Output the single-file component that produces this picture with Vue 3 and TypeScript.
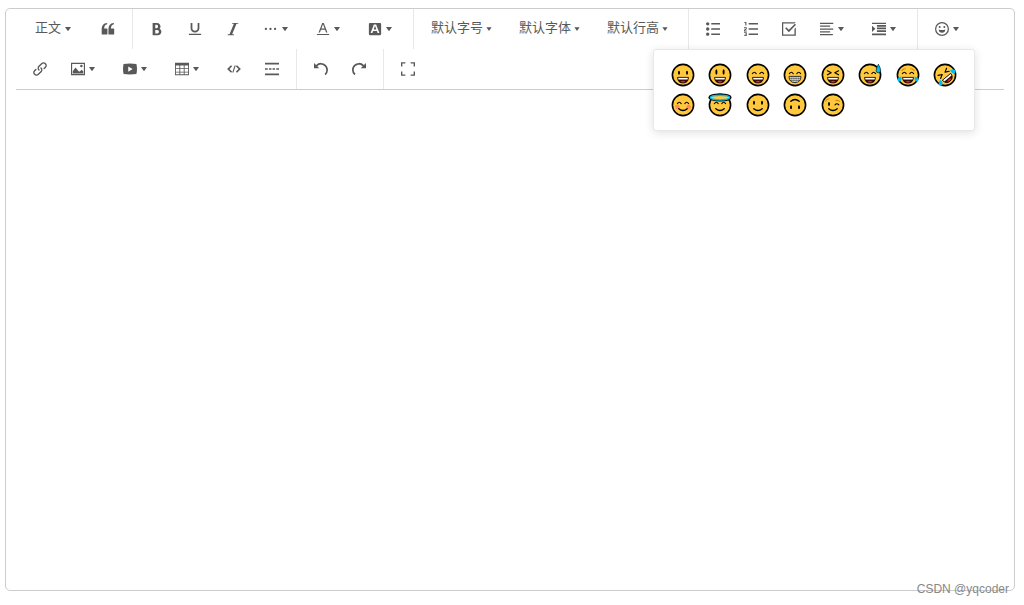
<script setup lang="ts">
import { ref } from 'vue'

interface Tool {
  kind: 'icon' | 'text' | 'divider'
  label?: string
  text?: string
  paths?: string
  menu?: boolean
  compact?: boolean
  heading?: boolean
  emoji?: boolean
}

const divider: Tool = { kind: 'divider' }
const icon = (label: string, paths: string, menu = false): Tool => ({ kind: 'icon', label, paths, menu })

const arrow =
  'M498.7 655.8l-197.6-268c-8.1-10.9-.3-26.4 13.3-26.4h395.2c13.6 0 21.4 15.4 13.3 26.4l-197.6 268c-6.6 9-20 9-26.6 0z'

const tools: Tool[] = [
  { kind: 'text', text: '正文', heading: true },
  icon('引用', 'M925 920H585q-40 0-40-40V590C545 270 660 100 945 80v80C800 190 730 290 725 480h200q40 0 40 40v360q0 40-40 40zM430 920H90q-40 0-40-40V590C50 270 165 100 450 80v80C305 190 235 290 230 480h200q40 0 40 40v360q0 40-40 40z'),
  divider,
  icon('粗体', 'M707.872 484.64A254.88 254.88 0 0 0 768 320c0-141.152-114.848-256-256-256H192v896h384c141.152 0 256-114.848 256-256a256.096 256.096 0 0 0-124.128-219.36zM384 192h101.504c55.968 0 101.504 57.408 101.504 128s-45.536 128-101.504 128H384V192z m159.008 640H384v-256h159.008c58.464 0 106.016 57.408 106.016 128s-47.552 128-106.016 128z'),
  icon('下划线', 'M704 64l128 0 0 416c0 159.072-143.264 288-320 288s-320-128.928-320-288l0-416 128 0 0 416c0 40.16 18.24 78.688 51.36 108.512 36.896 33.216 86.848 51.488 140.64 51.488s103.744-18.304 140.64-51.488c33.12-29.792 51.36-68.352 51.36-108.512l0-416zM64 864l896 0 0 80-896 0z'),
  icon('斜体', 'M896 64v64h-128L448 896h128v64H128v-64h128L576 128h-128V64z'),
  icon('更多', 'M140 505m-85 0a85 85 0 1 0 170 0a85 85 0 1 0-170 0zM475 505m-85 0a85 85 0 1 0 170 0a85 85 0 1 0-170 0zM810 505m-85 0a85 85 0 1 0 170 0a85 85 0 1 0-170 0z', true),
  icon('文字颜色', 'M64 872h896v80H64zM456 64h112l270 700H736l-76-205H364l-76 205H186zM396 475h232L512 160z', true),
  icon('背景色', 'M140 64h744q76 0 76 76v744q0 76-76 76H140q-76 0-76-76V140q0-76 76-76zM430 180L190 812h130l54-154h276l54 154h130L594 180zM414 548l98-270 98 270z', true),
  divider,
  { kind: 'text', text: '默认字号', compact: true },
  { kind: 'text', text: '默认字体', compact: true },
  { kind: 'text', text: '默认行高', compact: true },
  divider,
  icon('无序列表', 'M384 80h640v110H384zM384 457h640v110H384zM384 834h640v110H384zM0 135a125 125 0 1 0 250 0a125 125 0 1 0-250 0zM0 512a125 125 0 1 0 250 0a125 125 0 1 0-250 0zM0 889a125 125 0 1 0 250 0a125 125 0 1 0-250 0z'),
  icon('有序列表', 'M340 80h684v110H340zM340 457h684v110H340zM340 834h684v110H340zM96 0h80v256H96V70H32V0zM0 384h200v154L70 600v24h130v64H0V558l130-62v-48H0zM0 752h200v272H0v-60h130v-46H50v-56h80v-50H0z'),
  icon('待办', 'M0 20h1000l-90 90H90v804h820V520l100-110v604H0zM230 460l80-80 190 190L944 130l80 80-524 540z'),
  icon('对齐', 'M0 50h970v90H0zM0 260h740v90H0zM0 470h970v90H0zM0 680h740v90H0zM0 880h940v90H0z', true),
  icon('缩进', 'M0 50h1024v100H0zM360 212h664v130H360zM360 408h664v130H360zM360 604h664v130H360zM0 850h1024v110H0zM0 270l250 230L0 730z', true),
  divider,
  { kind: 'icon', label: '表情', menu: true, emoji: true, paths: 'M512 0a512 512 0 1 0 0 1024A512 512 0 0 0 512 0zM512 92a420 420 0 1 1 0 840a420 420 0 0 1 0-840zM270 370a72 72 0 1 0 144 0a72 72 0 1 0-144 0zM610 370a72 72 0 1 0 144 0a72 72 0 1 0-144 0zM270 540q242 90 484 0q-20 240-242 240T270 540z' },
  icon('链接', 'M440.224 635.776a51.84 51.84 0 0 1-36.768-15.232c-95.136-95.136-95.136-249.92 0-345.056l192-192C641.536 37.408 702.816 12.032 768 12.032s126.432 25.376 172.544 71.456c95.136 95.136 95.136 249.92 0 345.056l-87.776 87.776a51.968 51.968 0 1 1-73.536-73.536l87.776-87.776a140.16 140.16 0 0 0 0-197.984c-26.432-26.432-61.6-40.992-99.008-40.992s-72.544 14.56-99.008 40.992l-192 192a140.16 140.16 0 0 0 0 197.984 51.968 51.968 0 0 1-36.768 88.768zM256 1012a242.4 242.4 0 0 1-172.544-71.456c-95.136-95.136-95.136-249.92 0-345.056l87.776-87.776a51.968 51.968 0 1 1 73.536 73.536l-87.776 87.776a140.16 140.16 0 0 0 0 197.984c26.432 26.432 61.6 40.992 99.008 40.992s72.544-14.56 99.008-40.992l192-192a140.16 140.16 0 0 0 0-197.984 51.968 51.968 0 1 1 73.536-73.536c95.136 95.136 95.136 249.92 0 345.056l-192 192A242.4 242.4 0 0 1 256 1012z'),
  icon('图片', 'M0 54h1024v916H0zM84 138v748h856V138zM850 288a90 90 0 1 1-180 0a90 90 0 1 1 180 0zM896 832H128V680l200-270 250 290h60l140-130 118 110z', true),
  icon('视频', 'M981.184 145C837.568 125 678.848 110 512 110S186.432 125 42.816 145C15.296 267.808 0 386.848 0 512s15.264 244.16 42.816 367C186.464 899 345.152 914 512 914s325.568-15 469.184-35C1008.704 756.192 1024 637.152 1024 512s-15.264-244.16-42.816-367zM384 704V320l320 192-320 192z', true),
  icon('表格', 'M0 54v916h1024V54zM384 704V512h256v192zM640 768v128H384V768zM640 256v192H384V256zM320 256v192H64V256zM64 512h256v192H64zM704 512h256v192H704zM704 448V256h256v192zM64 768h256v128H64zM704 896V768h256v128z', true),
  icon('代码', 'M290 230l88 78-196 204 196 204-88 78L10 512zM734 230l-88 78 196 204-196 204 88 78 280-282zM556 256h84L470 768h-84z'),
  icon('分割线', 'M0 60h1024v120H0zM0 850h1024v120H0zM0 460h200v100H0zM290 460h180v100H290zM554 460h180v100H554zM824 460h200v100H824z'),
  divider,
  icon('撤销', 'M512 64A510.272 510.272 0 0 0 149.984 213.984L0.032 64v384h384L240.512 304.48A382.784 382.784 0 0 1 512.032 192c212.064 0 384 171.936 384 384 0 114.688-50.304 217.632-130.016 288l84.672 96a510.72 510.72 0 0 0 173.344-384c0-282.784-229.216-512-512-512z'),
  icon('重做', 'M0 576a510.72 510.72 0 0 0 173.344 384l84.672-96A383.136 383.136 0 0 1 128 576C128 363.936 299.936 192 512 192c106.048 0 202.048 42.976 271.52 112.48L640 448h384V64l-149.984 149.984A510.272 510.272 0 0 0 512 64C229.216 64 0 293.216 0 576z'),
  divider,
  icon('全屏', 'M0 16h320v100H100v220H0zM704 16h320v320H924V116H704zM0 688h100v220h220v100H0zM924 688h100v320H704V908h220z'),
]

type Face =
  | 'grinning' | 'smiley' | 'smile' | 'grin' | 'laughing' | 'sweat' | 'joy' | 'rofl'
  | 'blush' | 'innocent' | 'slight' | 'upside' | 'wink'

const faces: { name: Face; label: string }[] = [
  { name: 'grinning', label: '😀' },
  { name: 'smiley', label: '😃' },
  { name: 'smile', label: '😄' },
  { name: 'grin', label: '😁' },
  { name: 'laughing', label: '😆' },
  { name: 'sweat', label: '😅' },
  { name: 'joy', label: '😂' },
  { name: 'rofl', label: '🤣' },
  { name: 'blush', label: '😊' },
  { name: 'innocent', label: '😇' },
  { name: 'slight', label: '🙂' },
  { name: 'upside', label: '🙃' },
  { name: 'wink', label: '😉' },
]

const isOneOf = (face: Face, ...names: Face[]) => names.includes(face)

const content = ref('')
const emojiOpen = ref(true)

function press(tool: Tool) {
  if (tool.emoji) emojiOpen.value = !emojiOpen.value
}
</script>

<template>
  <main class="page">
    <section class="editor">
      <div class="toolbar" role="toolbar" aria-label="工具栏">
        <template v-for="(tool, i) in tools" :key="i">
          <span v-if="tool.kind === 'divider'" class="divider"></span>
          <div v-else class="item">
            <button
              type="button"
              :class="['tool', { heading: tool.heading, select: tool.compact }]"
              :aria-label="tool.label"
              @click="press(tool)"
            >
              <template v-if="tool.kind === 'text'">
                <span>{{ tool.text }}</span>
                <svg :class="['arrow', { compact: tool.compact }]" viewBox="0 0 1024 1024"><path :d="arrow" /></svg>
              </template>
              <template v-else>
                <svg class="icon" viewBox="0 0 1024 1024"><path fill-rule="evenodd" :d="tool.paths" /></svg>
                <svg v-if="tool.menu" class="arrow" viewBox="0 0 1024 1024"><path :d="arrow" /></svg>
              </template>
            </button>
            <div v-if="tool.emoji && emojiOpen" class="popup">
              <button
                v-for="face in faces"
                :key="face.name"
                type="button"
                class="emoji"
                :aria-label="face.label"
                @click="content += face.label"
              >
                <svg class="face" viewBox="0 0 24 24">
                  <circle cx="12" cy="12" r="10.6" fill="#ffc83d" stroke="#000" stroke-width="1.6" />
                  <g :transform="face.name === 'rofl' ? 'rotate(-40 12 12)' : face.name === 'upside' ? 'rotate(180 12 12)' : undefined">
                    <g v-if="isOneOf(face.name, 'grinning', 'slight', 'upside')" fill="#000">
                      <ellipse cx="8" cy="9.8" rx="1" ry="2" />
                      <ellipse cx="16" cy="9.8" rx="1" ry="2" />
                    </g>
                    <g v-if="face.name === 'smiley'" fill="#000">
                      <ellipse cx="8.4" cy="9" rx="1" ry="2.8" />
                      <ellipse cx="15.6" cy="9" rx="1" ry="2.8" />
                    </g>
                    <path
                      v-if="isOneOf(face.name, 'smile', 'grin', 'sweat', 'joy', 'blush', 'innocent')"
                      class="line"
                      d="M6.4 10.6q1.9-2.6 3.8 0M13.8 10.6q1.9-2.6 3.8 0"
                    />
                    <path
                      v-if="isOneOf(face.name, 'laughing', 'rofl')"
                      class="line"
                      d="M6.4 7.8l3.8 2-3.8 2M17.6 7.8l-3.8 2 3.8 2"
                    />
                    <g v-if="face.name === 'wink'">
                      <ellipse cx="8" cy="11" rx="1" ry="2" fill="#000" />
                      <path class="line" d="M14 11.8q1.9-2.2 3.8 0" />
                      <path class="brow" d="M4.6 8.2q1.2-2.6 3.6-2.4M14.8 7.6q2-.8 3.6.8" />
                    </g>
                    <path v-if="face.name === 'joy'" class="brow" d="M5.8 7.6q1.3-2 3.5-1.8M14.7 5.8q2.2-.2 3.5 1.8" />
                    <g v-if="isOneOf(face.name, 'grinning', 'smiley', 'smile', 'laughing', 'sweat', 'joy', 'rofl')">
                      <path d="M6.6 14.4h10.8q-.2 5.6-5.4 5.6t-5.4-5.6z" fill="#3b0a08" />
                      <path d="M7 14.4h10v2.1H7z" fill="#fff" />
                      <path d="M9 19.2q3-3 6 0-3 1.4-6 0z" fill="#e52b20" />
                      <path d="M6.6 14.4h10.8q-.2 5.6-5.4 5.6t-5.4-5.6z" fill="none" stroke="#000" stroke-width=".8" />
                    </g>
                    <g v-if="face.name === 'grin'">
                      <path d="M6 13.4h12q-.2 6.2-6 6.2T6 13.4z" fill="#fff" stroke="#222" stroke-width=".9" />
                      <path
                        d="M6.4 15.4h11.2M7.4 17.4h9.2M8.2 13.6v4.4M10.1 13.6v5.6M12 13.6v5.8M13.9 13.6v5.6M15.8 13.6v4.4"
                        fill="none"
                        stroke="#222"
                        stroke-width=".5"
                      />
                    </g>
                    <g v-if="face.name === 'blush'" fill="#ff8c55">
                      <circle cx="6.4" cy="14" r="2.2" />
                      <circle cx="17.6" cy="14" r="2.2" />
                    </g>
                    <path
                      v-if="isOneOf(face.name, 'blush', 'innocent', 'slight', 'upside', 'wink')"
                      class="line smile"
                      d="M7.8 15.8q4.2 3.6 8.4 0"
                    />
                    <g v-if="face.name === 'joy'" fill="#00bcf2">
                      <path d="M5.4 13.6q.4 5-2 5-2.8-.4-1.6-3 1-1.4 3.6-2z" />
                      <path d="M18.6 13.6q-.4 5 2 5 2.8-.4 1.6-3-1-1.4-3.6-2z" />
                    </g>
                    <g v-if="face.name === 'rofl'" fill="#00bcf2">
                      <path d="M5.2 12.6q.6 5-2 5.2-3-.4-1.8-3 1-1.4 3.8-2.2z" />
                      <path d="M18.8 11.6q-.6 5 2 5.2 3-.4 1.8-3-1-1.4-3.8-2.2z" />
                    </g>
                  </g>
                  <g v-if="face.name === 'innocent'" fill="none">
                    <ellipse cx="12" cy="4.4" rx="10.4" ry="2.8" stroke="#000" stroke-width="2.4" />
                    <ellipse cx="12" cy="4.6" rx="9.6" ry="2.4" fill="#ffc83d" stroke="#00bcf2" stroke-width="1.4" />
                  </g>
                  <path
                    v-if="face.name === 'sweat'"
                    d="M20.4 1.2q4.6 8.4 0 8.6-4.6-.2 0-8.6z"
                    fill="#00bcf2"
                    stroke="#000"
                    stroke-width=".6"
                  />
                </svg>
              </button>
            </div>
          </div>
        </template>
      </div>
      <textarea v-model="content" class="content" aria-label="正文内容"></textarea>
    </section>
    <span class="watermark">CSDN @yqcoder</span>
  </main>
</template>

<style>
body {
  margin: 0;
  background: #fff;
}
</style>

<style scoped>
.page {
  position: relative;
  box-sizing: border-box;
  display: flex;
  min-height: 100vh;
  padding: 8px 9px 14px 5px;
  font-family: "Liberation Sans", "Noto Sans CJK SC", sans-serif;
  color: #595959;
}

.editor {
  display: flex;
  flex: 1;
  flex-direction: column;
  min-width: 0;
  border: 1px solid #ccc;
  border-radius: 5px;
}

.toolbar {
  display: flex;
  flex-wrap: wrap;
  margin: 0 10px;
  padding: 0 5px;
  border-bottom: 1px solid #ccc;
}

.item {
  position: relative;
  display: flex;
  height: 40px;
  padding: 4px;
  box-sizing: border-box;
}

.tool {
  display: flex;
  align-items: center;
  justify-content: center;
  padding: 0 8px;
  border: 0;
  background: transparent;
  color: inherit;
  font: 400 13px/20px "Liberation Sans", "Noto Sans CJK SC", sans-serif;
  white-space: nowrap;
  cursor: pointer;
}

.tool.heading {
  min-width: 60px;
}

.tool.select {
  min-width: 80px;
}

.tool span {
  padding-bottom: 2px;
}

.tool:hover {
  background: #f1f1f1;
}

.divider {
  width: 1px;
  height: 40px;
  margin: 0 5px;
  background: #e8e8e8;
}

.icon,
.arrow {
  display: block;
  flex: none;
  width: 14px;
  height: 14px;
  fill: #595959;
}

.arrow.compact {
  width: 12px;
  height: 12px;
}

.popup {
  position: absolute;
  top: 40px;
  right: 0;
  z-index: 2;
  display: grid;
  grid-template-columns: repeat(8, 1fr);
  box-sizing: border-box;
  width: 322px;
  padding: 10px;
  border: 1px solid #e8e8e8;
  border-radius: 3px;
  background: #fff;
  box-shadow: 0 2px 10px rgba(0, 0, 0, 0.12);
}

.emoji {
  display: flex;
  align-items: center;
  justify-content: center;
  height: 30px;
  padding: 0;
  border: 0;
  background: transparent;
  cursor: pointer;
}

.face {
  display: block;
  width: 24px;
  height: 24px;
}

.line,
.brow {
  fill: none;
  stroke: #000;
  stroke-width: 1.1;
  stroke-linecap: round;
  stroke-linejoin: round;
}

.smile {
  stroke-width: 1.4;
}

.brow {
  stroke: #d48a13;
}

.content {
  flex: 1;
  box-sizing: border-box;
  padding: 10px;
  border: 0;
  outline: 0;
  background: transparent;
  color: inherit;
  font: inherit;
  resize: none;
}

.watermark {
  position: absolute;
  right: 15px;
  bottom: 8px;
  color: #888;
  font-size: 12px;
  line-height: 16px;
  pointer-events: none;
}
</style>
